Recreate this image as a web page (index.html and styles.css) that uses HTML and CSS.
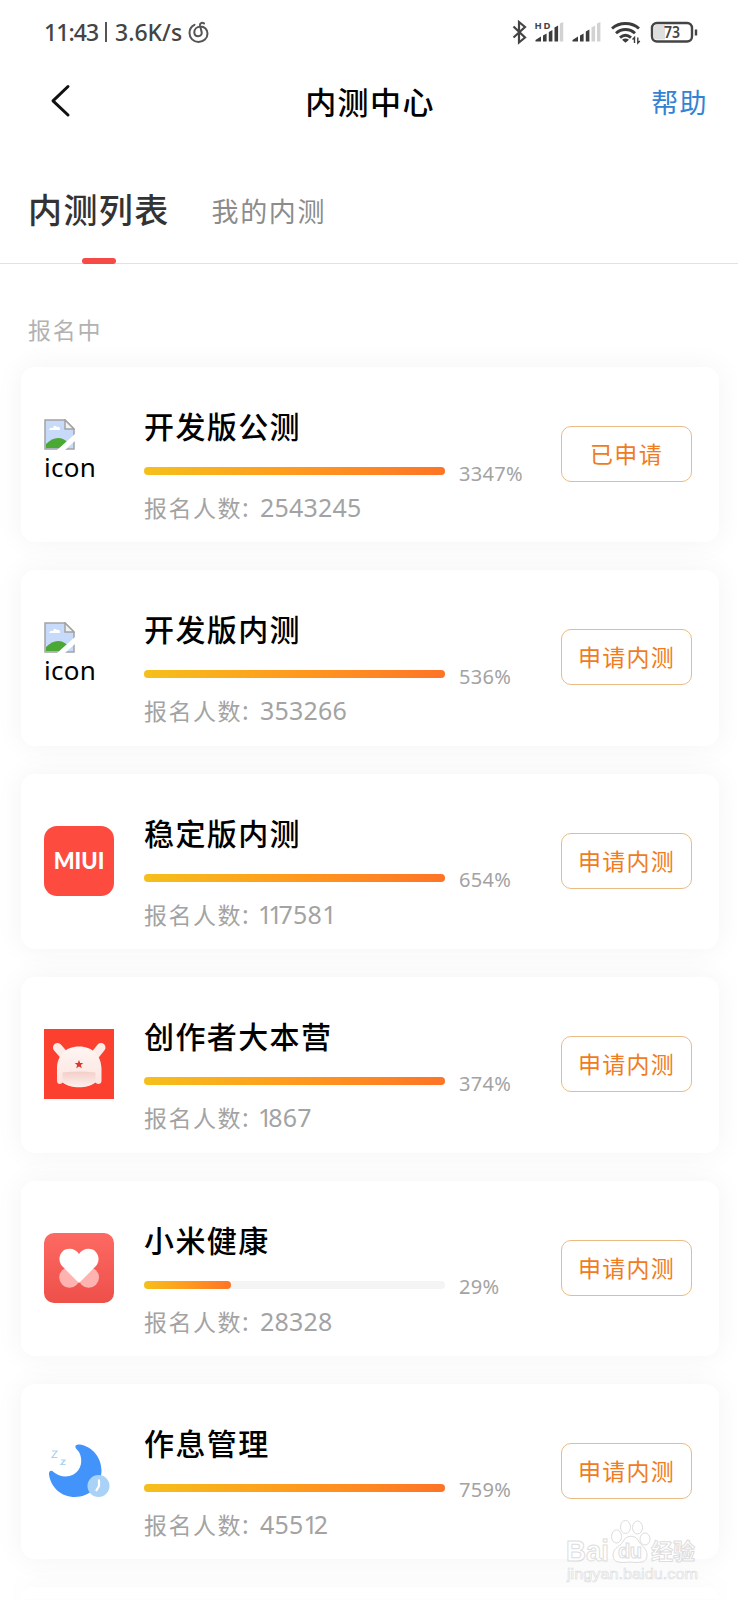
FILE: index.html
```html
<!DOCTYPE html>
<html lang="zh-CN">
<head>
    <meta charset="UTF-8">
    <meta name="viewport" content="width=device-width, initial-scale=1.0">
    <title>内测中心</title>
    <link rel="stylesheet" href="styles.css">
</head>
<body>
    <!-- Status bar -->
    <div class="status-bar">
        <div class="status-left">
            <span class="time">11:43</span>
            <span class="divider"></span>
            <span class="speed">3.6K/s</span>
            <svg class="music-icon" width="22" height="23" viewBox="0 0 22 23" fill="none" stroke="#555" stroke-width="2" stroke-linecap="round">
                <path d="M6.500 3.800C3.300 5.400 1.500 8.500 1.500 12c0 5 3.900 9 9 9s9-3.600 9-8.600c0-4-3-6.900-7-6.900-4 .2-6.200 3-6.200 5.800 0 2.400 1.700 4 3.900 4 2.300 0 3.900-1.700 3.500-4L12 4.400C11.700 2.200 13.800 1.200 16 2.400"/>
            </svg>
        </div>
        <div class="status-right">
            <svg width="190" height="28" viewBox="510 18 190 28">
                <path d="M513.500 26.500 525 37.500 519 42.500V22L525 27 513.500 37.500" fill="none" stroke="#444" stroke-width="2.200"/>
                <text x="534.500" y="28.500" class="hd" textLength="16">HD</text>
                <g fill="#3c3c3c">
                    <path d="M535.500 41.500v-1.500l5.500-3.500v5z"/>
                    <path d="M543 35.500l3.600-2v8h-3.600zM548.800 32l3.600-2v11.500h-3.600zM554.500 27.500l3.600-2v16h-3.600z"/>
                    <path d="M572.500 41.500v-1.500l5.500-3.500v5zM580 35.500l3.600-2v8h-3.600zM585.800 31.500l3.600-2v12h-3.600z"/>
                </g>
                <g fill="#d2d2d2">
                    <path d="M559.800 23.500l3.400-1.500v19.500h-3.400zM591.500 27.500l3.600-2v16h-3.600zM597 23.500l3.400-1.500v19.500h-3.400z"/>
                </g>
                <g fill="none" stroke="#3c3c3c" stroke-width="2.900">
                    <path d="M612 28.500c7.500-6.700 19.500-6.700 27 0M616 33.200c5.500-5 13.500-5 19 0M620 37.600c3.500-3 7.500-3 11 0"/>
                    <path d="M634.500 43v-5.500l-2 2M637.800 37.500v5.500l2-2" stroke-width="1.400"/>
                </g>
                <path d="M622 39.800q3.500-2.500 7 0l-3.500 3z" fill="#3c3c3c"/>
                <rect x="652" y="23" width="40" height="18.500" rx="5" fill="#fff" stroke="#444" stroke-width="2.400"/>
                <path d="M656 25h9v14.500h-9q-2.200 0-2.200-2.500v-9.500q0-2.500 2.200-2.500z" fill="#dedede"/>
                <text x="672" y="37.600" class="battery" text-anchor="middle" textLength="16" lengthAdjust="spacingAndGlyphs">73</text>
                <path d="M696 29.500v6" stroke="#444" stroke-width="2.400"/>
            </svg>
        </div>
    </div>

    <!-- Title bar -->
    <div class="header">
        <svg class="back" width="24" height="36" viewBox="0 0 24 36" fill="none" stroke="#111" stroke-width="3" stroke-linecap="round" stroke-linejoin="round">
            <path d="M20 3.500 5 17.800 20 32"/>
        </svg>
        <h1>内测中心</h1>
        <a class="help" href="#">帮助</a>
    </div>

    <!-- Tabs -->
    <div class="tabs">
        <div class="tab active">内测列表</div>
        <div class="tab">我的内测</div>
    </div>

    <p class="section-title">报名中</p>

    <div class="list">
        <div class="card">
            <div class="icon">
                <svg class="broken" width="31" height="31" viewBox="0 0 31 31">
                    <path d="M1 1h20l9 9v20H1z" fill="#c8dafa" stroke="#a3a3a3" stroke-width="1.500"/>
                    <path d="M5 11q1-3 4-2 1-4 4-1 3-1 3 3z" fill="#fff"/>
                    <path d="M2 29v-4q6-6 12-6 6 0 10 5l-7 5z" fill="#4ba834"/>
                    <path d="M13 31 31 15v7L21 31z" fill="#fff"/>
                    <path d="M21 1v9h9z" fill="#f2f2f2" stroke="#a3a3a3" stroke-width="1.500"/>
                </svg>
                <span class="alt">icon</span>
            </div>
            <div class="info">
                <h2>开发版公测</h2>
                <div class="progress"><div class="bar"><div class="fill" style="width: 100%"></div></div><span class="percent">3347%</span></div>
                <p class="count">报名人数<span class="colon">:</span><span>2543245</span></p>
            </div>
            <button class="btn"><span>已申请</span></button>
        </div>

        <div class="card">
            <div class="icon">
                <svg class="broken" width="31" height="31" viewBox="0 0 31 31">
                    <path d="M1 1h20l9 9v20H1z" fill="#c8dafa" stroke="#a3a3a3" stroke-width="1.500"/>
                    <path d="M5 11q1-3 4-2 1-4 4-1 3-1 3 3z" fill="#fff"/>
                    <path d="M2 29v-4q6-6 12-6 6 0 10 5l-7 5z" fill="#4ba834"/>
                    <path d="M13 31 31 15v7L21 31z" fill="#fff"/>
                    <path d="M21 1v9h9z" fill="#f2f2f2" stroke="#a3a3a3" stroke-width="1.500"/>
                </svg>
                <span class="alt">icon</span>
            </div>
            <div class="info">
                <h2>开发版内测</h2>
                <div class="progress"><div class="bar"><div class="fill" style="width: 100%"></div></div><span class="percent">536%</span></div>
                <p class="count">报名人数<span class="colon">:</span><span>353266</span></p>
            </div>
            <button class="btn"><span>申请内测</span></button>
        </div>

        <div class="card">
            <div class="icon miui">MIUI</div>
            <div class="info">
                <h2>稳定版内测</h2>
                <div class="progress"><div class="bar"><div class="fill" style="width: 100%"></div></div><span class="percent">654%</span></div>
                <p class="count">报名人数<span class="colon">:</span><span class="start-one"><i class="narrow">11</i>758<i class="narrow">1</i></span></p>
            </div>
            <button class="btn"><span>申请内测</span></button>
        </div>

        <div class="card">
            <div class="icon">
                <svg width="70" height="70" viewBox="0 0 70 70">
                    <defs>
                        <linearGradient id="hat" x1="0" y1="0" x2="0" y2="1">
                            <stop offset="0" stop-color="#fff5f2"/>
                            <stop offset="1" stop-color="#fbe3de"/>
                        </linearGradient>
                        <linearGradient id="brim" x1="0" y1="0" x2="0" y2="1">
                            <stop offset="0" stop-color="#f3cfc8"/>
                            <stop offset="1" stop-color="#fdf0ed"/>
                        </linearGradient>
                    </defs>
                    <rect width="70" height="70" fill="#fb402f"/>
                    <path d="M13.500 18.500 20 26M57 18.500 51 26" stroke="#fdebe7" stroke-width="9" stroke-linecap="round"/>
                    <path d="M13 52V40c0-13 8-22.500 22-22.500S57.500 27 57.500 40v12c0 3-4 4-6 1.500-9 6-24 6-33 0-2 2.500-5.500 1.500-5.500-1.500z" fill="url(#hat)"/>
                    <path d="M18.500 43.500q16.500-2 33 0v9.500c-7 7-26 7-33 0z" fill="url(#brim)"/>
                    <path d="M35 31l1.200 2.900 3.100.2-2.400 2 .8 3.100-2.700-1.700-2.700 1.700.8-3.100-2.400-2 3.100-.2z" fill="#d93a2e"/>
                </svg>
            </div>
            <div class="info">
                <h2>创作者大本营</h2>
                <div class="progress"><div class="bar"><div class="fill" style="width: 100%"></div></div><span class="percent">374%</span></div>
                <p class="count">报名人数<span class="colon">:</span><span class="start-one"><i class="narrow">1</i>867</span></p>
            </div>
            <button class="btn"><span>申请内测</span></button>
        </div>

        <div class="card">
            <div class="icon">
                <svg width="70" height="70" viewBox="0 0 70 70">
                    <defs>
                        <linearGradient id="health" x1="0" y1="0" x2="0" y2="1">
                            <stop offset="0" stop-color="#fd6a63"/>
                            <stop offset="1" stop-color="#ee4f49"/>
                        </linearGradient>
                    </defs>
                    <rect width="70" height="70" rx="10" fill="url(#health)"/>
                    <circle cx="25.500" cy="44.500" r="10.300" fill="#ffb3b1"/>
                    <circle cx="44.700" cy="44.500" r="10.300" fill="#ffb3b1"/>
                    <path d="M35 50 18.300 33.300C12.500 27 16 15.700 25.500 15.700c4 0 7.500 2 9.500 5.300 2-3.300 5.500-5.300 9.500-5.300 9.500 0 13 11.300 7.200 17.600z" fill="#fff"/>
                </svg>
            </div>
            <div class="info">
                <h2>小米健康</h2>
                <div class="progress"><div class="bar"><div class="fill" style="width: 29%"></div></div><span class="percent">29%</span></div>
                <p class="count">报名人数<span class="colon">:</span><span>28328</span></p>
            </div>
            <button class="btn"><span>申请内测</span></button>
        </div>

        <div class="card">
            <div class="icon">
                <svg width="70" height="70" viewBox="0 4 70 70">
                    <path d="M31.500 15.500C30.800 13 33 12 36 12.500 49 15 57.500 26 57.500 38.500 57.500 54 45 65 31 65 17 65 7 55.500 5 42.500 4.600 39 7.200 37.500 9.500 40c5 4.500 13.500 6 20 2.500 8-4.500 9.800-14.500 5.500-22.500-1.500-2-3-3-3.500-4.500z" fill="#4294fb"/>
                    <circle cx="54.500" cy="54" r="11" fill="#aad2f7"/>
                    <path d="M55 47.500v6.500l-3 5" fill="none" stroke="#fff" stroke-width="2.200"/>
                    <path d="M8 19h5l-5 6.500h5.500M17 28h4l-4 4.500h4.500" fill="none" stroke="#a9d3ee" stroke-width="1.200"/>
                </svg>
            </div>
            <div class="info">
                <h2>作息管理</h2>
                <div class="progress"><div class="bar"><div class="fill" style="width: 100%"></div></div><span class="percent">759%</span></div>
                <p class="count">报名人数<span class="colon">:</span><span>455<i class="narrow">1</i>2</span></p>
            </div>
            <button class="btn"><span>申请内测</span></button>
        </div>

        <div class="card next"></div>
    </div>

    <!-- Watermark over the last cards -->
    <svg class="watermark" width="140" height="70" viewBox="0 0 140 70">
        <g fill="#fff" stroke="#dadada" stroke-width="1">
            <text x="1" y="46" class="wm-main" textLength="43" lengthAdjust="spacingAndGlyphs">Bai</text>
            <ellipse cx="51.500" cy="21.500" rx="5" ry="6.500"/>
            <ellipse cx="60.500" cy="12" rx="5" ry="6.500"/>
            <ellipse cx="72.500" cy="12.500" rx="5" ry="6.500"/>
            <ellipse cx="80" cy="24" rx="5" ry="6"/>
            <path d="M48 40c0-8 9-9 11-15 3-5 11-5 14 0 3 6 9 8 9 15 0 8-7 8-17 7-10 1-17 1-17-7z"/>
            <text x="53" y="43" class="wm-du" textLength="24">du</text>
            <text x="86" y="44" class="wm-cn">经验</text>
            <text x="2" y="64" class="wm-url" textLength="131" lengthAdjust="spacingAndGlyphs">jingyan.baidu.com</text>
        </g>
    </svg>
</body>
</html>
```
FILE: styles.css
```css
/* Basic styling */
* {
    box-sizing: border-box;
}
body {
    position: relative;
    height: 1600px;
    margin: 0;
    overflow: hidden;
    background-color: #fff;
    color: #000;
    font-family: "Noto Sans", "Noto Sans CJK SC", sans-serif;
}
h1, h2, p {
    margin: 0;
}
/* Status bar */
.status-bar {
    display: flex;
    justify-content: space-between;
    height: 64px;
    padding: 18px 38px 0 44px;
}
.status-left {
    display: flex;
    align-items: center;
    height: 28px;
    color: #444;
    font-size: 23px;
    font-weight: 500;
}
.time {
    width: 54px;
    letter-spacing: -0.9px;
}
.divider {
    width: 2px;
    height: 20px;
    margin: 0 8px 0 7px;
    background-color: #555;
}
.speed {
    width: 66px;
}
.music-icon {
    margin-left: 7px;
}
.hd {
    font-size: 9.5px;
    font-weight: 700;
    fill: #444;
}
.battery {
    font-size: 15.5px;
    font-weight: 600;
    fill: #444;
}
/* Title bar */
.header {
    display: grid;
    grid-template-columns: 1fr auto 1fr;
    align-items: center;
    height: 74px;
    padding: 0 30px 0 48px;
}
.header h1 {
    margin-left: -16px;
    font-family: "Noto Sans CJK SC", sans-serif;
    font-size: 31px;
    font-weight: 500;
    line-height: 40px;
    letter-spacing: 1.4px;
}
.help {
    justify-self: end;
    color: #3482d4;
    font-size: 27px;
    letter-spacing: 1.4px;
    text-decoration: none;
}
/* Tabs */
.tabs {
    display: flex;
    align-items: center;
    gap: 42px;
    height: 126px;
    padding: 18px 28px 0;
    border-bottom: 1px solid #e2e2e2;
}
.tab {
    position: relative;
    padding-top: 4px;
    color: #8c8c8c;
    font-size: 27px;
    line-height: 40px;
    letter-spacing: 1.6px;
}
.tab.active {
    padding-top: 0;
    color: #333;
    font-size: 34px;
    font-weight: 500;
    letter-spacing: 1.4px;
}
.tab.active::after {
    content: "";
    position: absolute;
    left: 54px;
    bottom: -34px;
    width: 34px;
    height: 6px;
    border-radius: 3px;
    background-color: #f54a45;
}
.section-title {
    padding: 46px 0 0 28px;
    color: #b2b2b2;
    font-size: 23px;
    line-height: 40px;
    letter-spacing: 1.8px;
}
/* Cards */
.list {
    display: flex;
    flex-direction: column;
    gap: 28px;
    padding: 17px 19px 0 21px;
}
.card {
    display: flex;
    flex-shrink: 0;
    height: 175.4px;
    padding: 38px 27px 0 23px;
    border-radius: 14px;
    background-color: #fff;
    box-shadow: 0 0 30px rgba(0, 0, 0, 0.05);
}
.card.next {
    height: 12px;
    padding: 0;
    border-radius: 14px 14px 0 0;
}
.icon {
    flex-shrink: 0;
    width: 70px;
    height: 70px;
    margin-top: 14px;
}
.icon svg {
    display: block;
}
.alt {
    display: block;
    font-size: 26px;
    line-height: 34px;
    letter-spacing: 0.3px;
}
.miui {
    border-radius: 13px;
    background-color: #fe4b40;
    color: #fff;
    font-family: Lato, sans-serif;
    font-size: 22px;
    font-weight: 900;
    line-height: 70px;
    text-align: center;
}
.info {
    width: 416px;
    padding-left: 30px;
}
.info h2 {
    font-family: "Noto Sans CJK SC", sans-serif;
    font-size: 30px;
    font-weight: 500;
    line-height: 40px;
    letter-spacing: 1.4px;
}
.progress {
    display: flex;
    align-items: center;
    height: 26px;
    margin-top: 13px;
}
.bar {
    width: 301px;
    height: 8px;
    border-radius: 4px;
    background-color: #f4f4f4;
}
.fill {
    height: 100%;
    border-radius: 4px;
    background: linear-gradient(90deg, #f5c01b, #ff9a1e 50%, #fd7426);
}
.percent {
    margin: 4px 0 0 14px;
    color: #a3a3a3;
    font-size: 20px;
    letter-spacing: 0.3px;
}
.count {
    margin-top: 5px;
    color: #a3a3a3;
    font-family: "Noto Sans CJK SC", sans-serif;
    font-size: 23px;
    line-height: 36px;
    letter-spacing: 1.5px;
    white-space: nowrap;
}
.count span {
    font-family: "Noto Sans", sans-serif;
    font-size: 25px;
    letter-spacing: 0.2px;
}
.count .colon {
    display: inline-block;
    width: 18px;
}
.count .start-one {
    margin-left: -2px;
}
.narrow {
    font-style: normal;
    letter-spacing: -4px;
}
.btn {
    width: 131px;
    height: 56px;
    margin: 21px 0 0 auto;
    padding: 0 0 2px;
    border: 1px solid #e8bc84;
    border-radius: 10px;
    background-color: #fff;
    font-family: "Noto Sans CJK SC", sans-serif;
    font-size: 23px;
    letter-spacing: 1.3px;
}
.btn span {
    color: #f07c22;
}
/* Watermark */
.watermark {
    position: absolute;
    left: 565px;
    top: 1515px;
    opacity: 0.9;
}
.wm-main {
    font: 700 29px "Liberation Sans", sans-serif;
}
.wm-du {
    font: 700 20px "Liberation Sans", sans-serif;
}
.wm-cn {
    font: 700 22px "Noto Sans CJK SC", sans-serif;
}
.wm-url {
    font: 400 15px "Liberation Sans", sans-serif;
    stroke-width: 0.6px;
}
```
